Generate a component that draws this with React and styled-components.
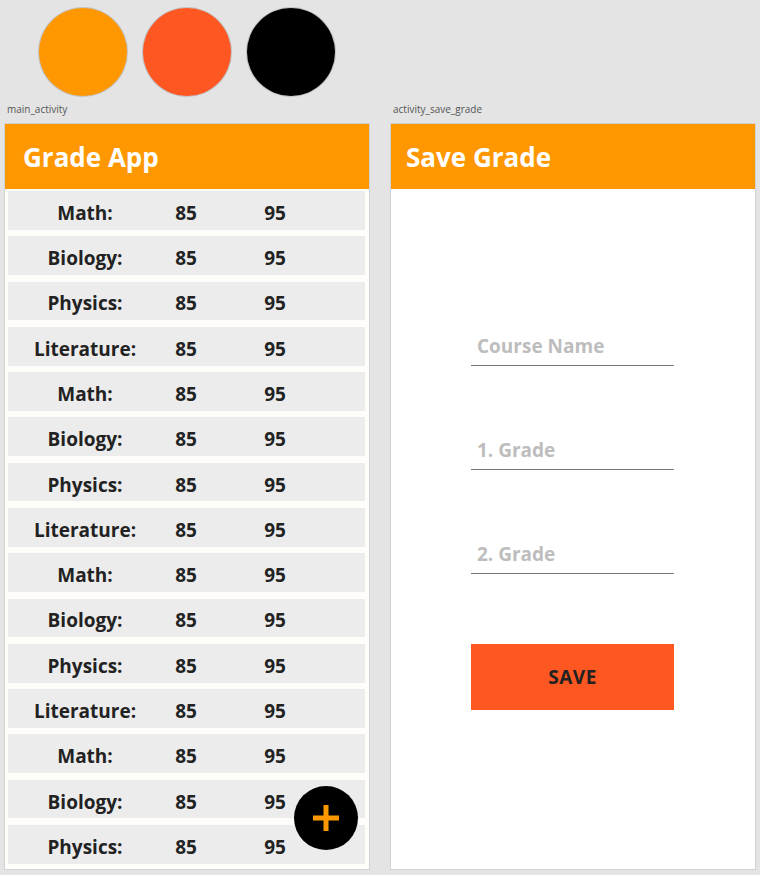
import React from 'react'
import styled, { createGlobalStyle } from 'styled-components'

const GlobalStyle = createGlobalStyle`
  body {
    margin: 0;
    background: #e4e4e4;
    font-family: "Open Sans", "Noto Sans", sans-serif;
  }
`

const courses = ['Math:', 'Biology:', 'Physics:', 'Literature:']
const rows = Array.from({ length: 15 }, (_, i) => courses[i % 4])

const App = () => {
  return (
    <Page>
      <GlobalStyle />
      <Swatches>
        <Swatch color="#ff9800" />
        <Swatch color="#ff5722" />
        <Swatch color="#000000" />
      </Swatches>
      <Screens>
        <Screen>
          <Label>main_activity</Label>
          <Panel>
            <Header $inset={18}>Grade App</Header>
            <List>
              {rows.map((name, i) => (
                <Row key={i}>
                  <Cell>{name}</Cell>
                  <Cell>85</Cell>
                  <Cell>95</Cell>
                </Row>
              ))}
            </List>
            <Fab>
              <svg width="26" height="26" viewBox="0 0 26 26">
                <rect x="10.5" y="0" width="5" height="26" fill="#ff9800" />
                <rect x="0" y="10.5" width="26" height="5" fill="#ff9800" />
              </svg>
            </Fab>
          </Panel>
        </Screen>
        <Screen>
          <Label>activity_save_grade</Label>
          <Panel $white>
            <Header $inset={15}>Save Grade</Header>
            <Form>
              <Field placeholder="Course Name" />
              <Field placeholder="1. Grade" />
              <Field placeholder="2. Grade" />
              <SaveButton>SAVE</SaveButton>
            </Form>
          </Panel>
        </Screen>
      </Screens>
    </Page>
  )
}

const Page = styled.div`
  width: 760px;
  height: 875px;
  overflow: hidden;
`

const Swatches = styled.div`
  display: flex;
  gap: 16px;
  padding: 8px 0 0 39px;
  height: 88px;
`

const Swatch = styled.div`
  width: 88px;
  height: 88px;
  border-radius: 50%;
  background: ${p => p.color};
  box-shadow: 0 0 0 1px rgba(0, 0, 0, 0.15);
`

const Screens = styled.div`
  display: flex;
  gap: 20px;
  padding: 6px 0 0 4px;
`

const Screen = styled.div`
  display: flex;
  flex-direction: column;
  width: 366px;
`

const Label = styled.div`
  font-size: 10px;
  color: #555;
  height: 14px;
  line-height: 14px;
  padding-left: 3px;
  margin-bottom: 7px;
`

const Panel = styled.div`
  position: relative;
  height: 745px;
  border: 1px solid #d2d2d2;
  background: ${p => (p.$white ? '#fff' : '#fffdf9')};
  display: flex;
  flex-direction: column;
`

const Header = styled.div`
  height: 65px;
  background: #ff9800;
  color: #fff;
  font-size: 26px;
  font-weight: 700;
  display: flex;
  align-items: center;
  padding-left: ${p => p.$inset}px;
  flex-shrink: 0;
`

const List = styled.div`
  display: flex;
  flex-direction: column;
  gap: 6.6px;
  padding: 2px 4px 0 3px;
`

const Row = styled.div`
  height: 38.7px;
  box-sizing: border-box;
  padding-top: 5px;
  background: #ececec;
  display: grid;
  grid-template-columns: 154px 48px 130px;
  align-items: center;
`

const Cell = styled.div`
  text-align: center;
  font-size: 19px;
  font-weight: 700;
  color: #222;
`

const Fab = styled.div`
  position: absolute;
  left: 289px;
  bottom: 19px;
  width: 64px;
  height: 64px;
  border-radius: 50%;
  background: #000;
  display: flex;
  align-items: center;
  justify-content: center;
`

const Form = styled.div`
  display: flex;
  flex-direction: column;
  gap: 64px;
  padding: 137px 0 0 80px;
  width: 203px;
`

const Field = styled.input`
  width: 203px;
  height: 40px;
  box-sizing: border-box;
  border: none;
  border-bottom: 1px solid #777;
  outline: none;
  background: transparent;
  font-family: inherit;
  font-size: 19px;
  font-weight: 700;
  padding: 0 6px;
  &::placeholder {
    color: #bdbdbd;
  }
`

const SaveButton = styled.button`
  width: 203px;
  height: 66px;
  margin-top: 6px;
  border: none;
  background: #ff5722;
  color: #222;
  font-family: inherit;
  font-size: 19px;
  font-weight: 700;
  letter-spacing: 0.5px;
`

export default App
